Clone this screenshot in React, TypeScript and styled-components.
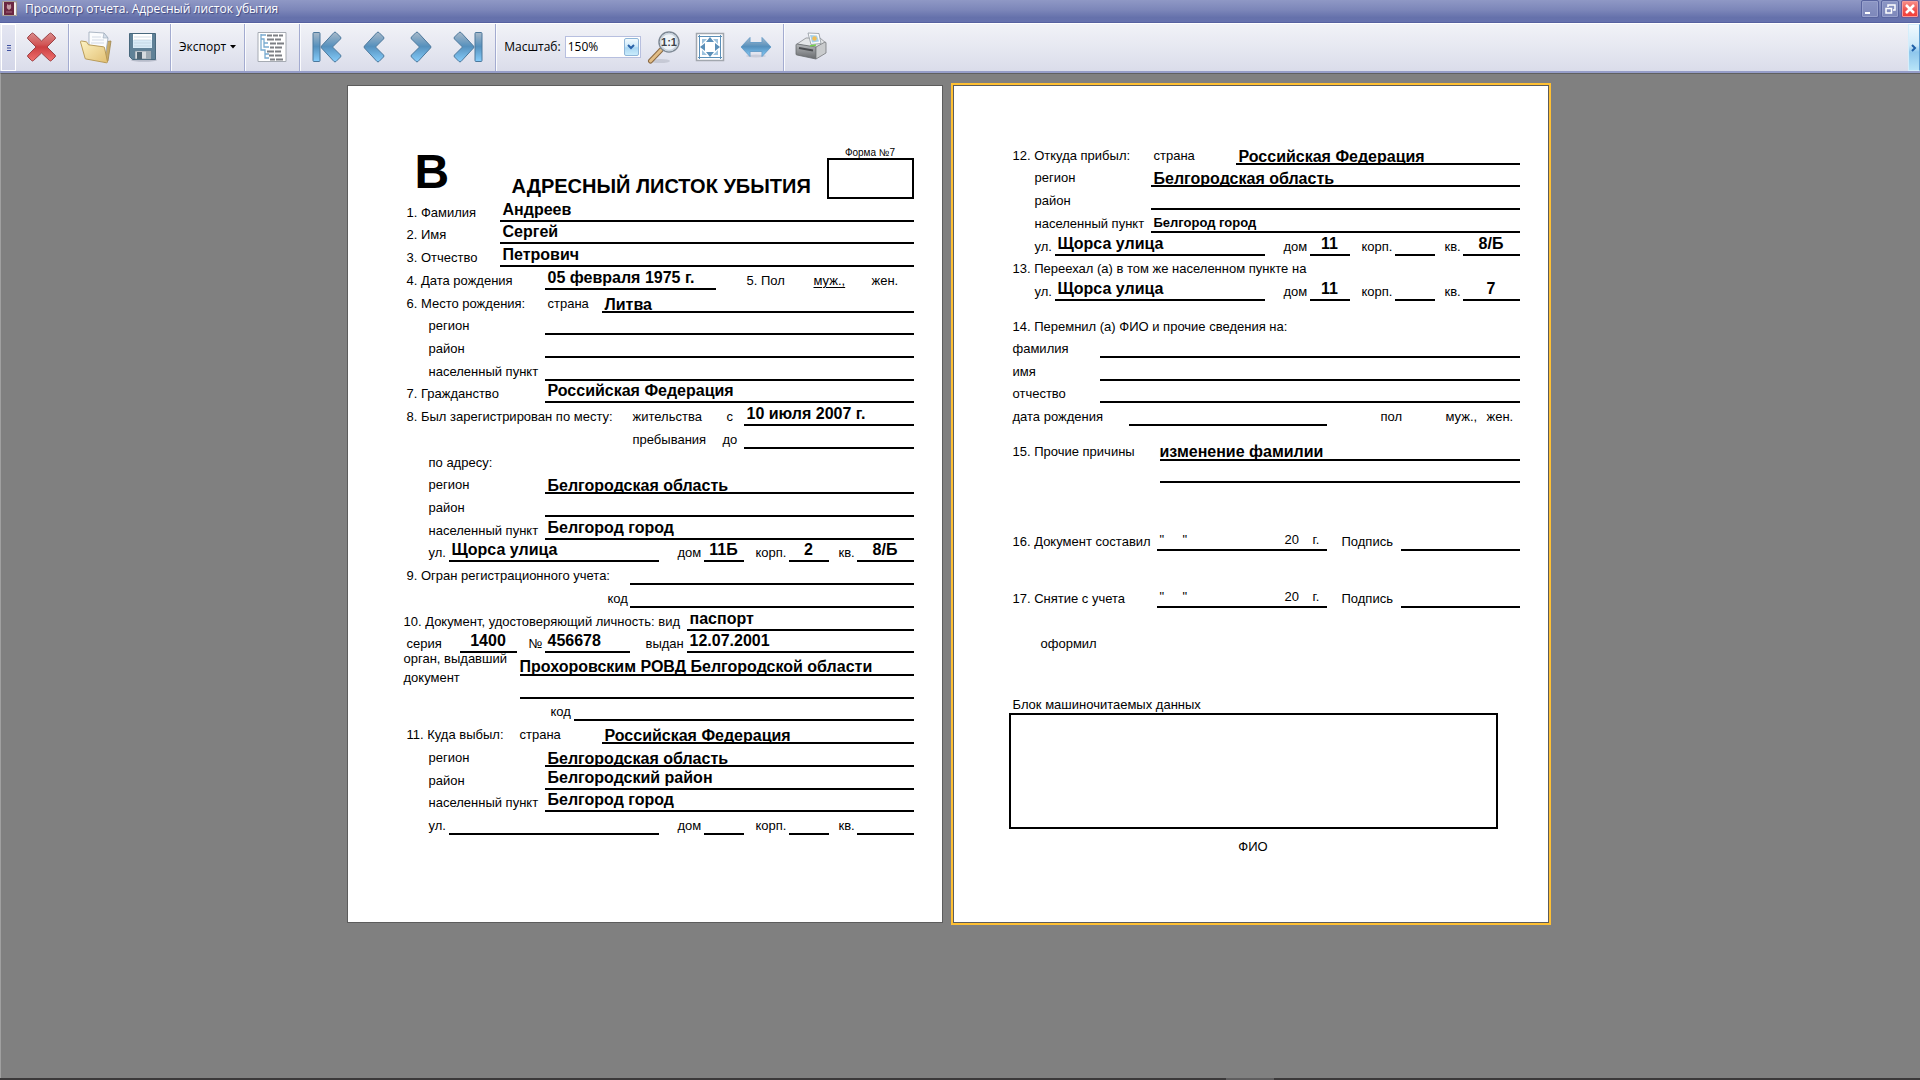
import React from "react";
import styled, { createGlobalStyle } from "styled-components";

const GlobalStyle = createGlobalStyle`
  *, *::before, *::after { box-sizing: border-box; }
  html, body, #root { height: 100%; }
  body { margin: 0; background: #808080; overflow: hidden; }
`;

const uiFont = `"Open Sans", "Noto Sans", sans-serif`;
const paperFont = `"Liberation Sans", Arial, sans-serif`;

/* ---------- window chrome ---------- */

const Window = styled.div`
  display: flex;
  flex-direction: column;
  min-height: 100vh;
  font-family: ${uiFont};
  font-size: 12px;
  color: #000;
`;

const TitleBar = styled.header`
  display: flex;
  align-items: center;
  height: 23px;
  padding: 0 1px 4px 2px;
  background: linear-gradient(#8f98c5, #7c86b9 45%, #6571ab 80%, #6672ae);
  border-bottom: 1px solid #5661a0;
`;

const Title = styled.h1`
  flex: 1;
  margin: 0 0 0 7px;
  font-size: 12px;
  line-height: 18px;
  font-weight: 400;
  color: #fff;
  text-shadow: 1px 1px 1px #3c467f;
`;

const WindowButtons = styled.div`
  display: flex;
  gap: 2px;
`;

const WindowButton = styled.button<{ $close?: boolean }>`
  display: grid;
  place-items: center;
  width: 18px;
  height: 18px;
  padding: 0;
  border: 1px solid ${(p) => (p.$close ? "#6b5a98" : "#59649f")};
  border-radius: 2px;
  background: ${(p) =>
    p.$close ? "linear-gradient(#f7908a, #ef5350 55%, #f23b34)" : "linear-gradient(#8c96c4, #7d87ba)"};
  box-shadow: inset 0 0 0 1px ${(p) => (p.$close ? "#f59a98" : "#98a1cc")};
`;

const ToolBar = styled.nav`
  display: flex;
  align-items: stretch;
  height: 50px;
  padding-left: 1px;
  background: linear-gradient(#f1f2f7, #e6e8f1 50%, #dadcea);
  border-top: 1px solid #fff;
  border-bottom: 2px solid #959dc8;
`;

const Grip = styled.div`
  display: grid;
  place-items: center;
  width: 15px;
  background: linear-gradient(#e4e6f2, #d3d6e8);
  border: 1px solid #fff;
`;

const Group = styled.div<{ $pad?: number; $gap?: number }>`
  display: flex;
  align-items: center;
  gap: ${(p) => p.$gap ?? 1}px;
  padding: 0 ${(p) => p.$pad ?? 4}px 1px;
  border-right: 1px solid #a3abd0;
  box-shadow: 1px 0 0 #fafbfd;
  &:last-of-type { border-right: 0; box-shadow: none; }
`;

const ToolButton = styled.button`
  display: grid;
  place-items: center;
  width: 46px;
  height: 42px;
  padding: 0;
  border: 0;
  background: none;
`;

const ExportButton = styled.button`
  display: flex;
  align-items: center;
  gap: 4px;
  padding: 0;
  border: 0;
  background: none;
  font: 12px/18px ${uiFont};
  color: #000;
`;

const ScaleLabel = styled.label`
  display: flex;
  align-items: center;
  gap: 4px;
  padding-left: 4px;
  line-height: 18px;
`;

const SelectBox = styled.span`
  position: relative;
  display: block;
  width: 76px;
`;

const Select = styled.select`
  appearance: none;
  display: block;
  width: 100%;
  height: 22px;
  padding: 0 0 0 2px;
  border: 1px solid #b7bfdf;
  border-radius: 0;
  background: #fff;
  font: 12px/18px ${uiFont};
  color: #000;
`;

const SelectArrow = styled.span`
  position: absolute;
  top: 2px;
  right: 2px;
  display: grid;
  place-items: center;
  width: 15px;
  height: 18px;
  border: 1px solid #8fb6d8;
  border-radius: 2px;
  background: linear-gradient(#f2fafe, #cfeafa 45%, #a9d6f3 55%, #c9ecfb);
  pointer-events: none;
`;

const Overflow = styled.button`
  display: grid;
  place-items: center;
  width: 12px;
  margin-left: auto;
  padding: 0;
  border: 1px solid #d5eefb;
  border-right-color: #5f9fd2;
  background: linear-gradient(#f0f9fe, #cde9fa 45%, #8ec6ec 60%, #b7e4f8);
`;

/* ---------- paper ---------- */

const Workspace = styled.main`
  flex: 1;
  display: flex;
  justify-content: center;
  align-items: flex-start;
  gap: 10px;
  padding: 11px 26px 0 0;
  background: #808080;
  border-top: 1px solid #606060;
  border-left: 1px solid #a0a0a0;
`;

const StatusStrip = styled.footer`
  display: flex;
  height: 2px;
  padding-left: 1226px;
  background: #3b393a;
  &::before { content: ""; width: 48px; background: #5f5e5f; }
`;

const Sheet = styled.section<{ $current?: boolean }>`
  width: 596px;
  min-height: 838px;
  padding: 56px 28px 0 59px;
  border: 1px solid #5c5c5c;
  outline: ${(p) => (p.$current ? "2px solid #ffc032" : "none")};
  background: #fff;
  font-family: ${paperFont};
  font-size: 13px;
  line-height: 15px;
`;

const SheetHeader = styled.header`
  display: grid;
  grid-template-columns: 105px 1fr 87px;
  align-items: end;
  height: 57px;
`;

const Letter = styled.strong`
  padding-left: 8px;
  font-size: 48px;
  line-height: 55px;
`;

const SheetTitle = styled.h2`
  margin: 0;
  font-size: 20px;
  line-height: 25px;
  font-weight: 700;
  white-space: nowrap;
`;

const FormNumber = styled.div`
  font-size: 10px;
  line-height: 11px;
  text-align: center;
`;

const Frame = styled.div<{ $h: number }>`
  height: ${(p) => p.$h}px;
  border: 2px solid #000;
`;

const Rows = styled.div<{ $h: number; $gap?: number }>`
  display: grid;
  grid-auto-rows: 1fr;
  height: ${(p) => p.$h}px;
  margin-top: ${(p) => p.$gap ?? 0}px;
  line-height: 19px;
`;

const Row = styled.div<{ $cols: string; $indent?: number; $span?: number }>`
  display: grid;
  grid-template-columns: ${(p) => p.$cols};
  align-items: end;
  padding-left: ${(p) => p.$indent ?? 0}px;
  grid-row: span ${(p) => p.$span ?? 1};
  white-space: nowrap;
`;

const OutRow = styled(Row)`
  margin-left: -3px;
`;

const Line = styled.span<{ $low?: boolean; $center?: boolean; $flush?: boolean; $small?: boolean }>`
  display: flex;
  align-items: flex-end;
  align-self: stretch;
  justify-content: ${(p) => (p.$center ? "center" : "flex-start")};
  padding: 0 0 ${(p) => (p.$low || p.$flush || p.$small ? 0 : 1)}px ${(p) => (p.$center || p.$flush ? 0 : 3)}px;
  overflow: ${(p) => (p.$low ? "hidden" : "visible")};
  border-bottom: 2px solid #000;
  font-size: ${(p) => (p.$small ? 13 : 16)}px;
  line-height: ${(p) => (p.$low ? 12 : p.$flush ? 14 : p.$small ? 17 : 19)}px;
  font-weight: 700;
`;

const Underlined = styled.u`
  text-underline-offset: 2px;
`;

const Issuer = styled.span`
  align-self: start;
  margin-top: -4px;
`;

const LinePair = styled.span`
  display: grid;
  grid-auto-rows: 1fr;
  align-self: stretch;
`;

const DateLine = styled(Line)`
  display: grid;
  grid-template-columns: 23px 102px 28px 1fr;
  align-items: end;
  font-size: 13px;
  font-weight: 400;
  line-height: 17px;
`;

const Caption = styled.p<{ $gap: number; $indent?: number; $center?: boolean }>`
  margin: ${(p) => p.$gap}px 0 0;
  padding-left: ${(p) => p.$indent ?? 0}px;
  text-align: ${(p) => (p.$center ? "center" : "left")};
`;

const MachineBlock = styled.div`
  width: 489px;
  margin-left: -4px;
  padding-top: 1px;
`;

/* ---------- icons ---------- */

const BlueGradient = ({ id }: { id: string }) => (
  <defs>
    <linearGradient id={id} x1="0" y1="0" x2="0" y2="1">
      <stop offset="0" stopColor="#a9b9c8" />
      <stop offset=".48" stopColor="#5590bd" />
      <stop offset="1" stopColor="#86cdfb" />
    </linearGradient>
  </defs>
);

const PassportIcon = () => (
  <svg width="16" height="16" viewBox="0 0 16 16">
    <path d="M1 1h12l2 1v13H2l-1-1z" fill="#d9d0cf" />
    <path d="M2 1h10v13H2z" fill="#6b2742" />
    <path d="M12 2h2v12l-2 1z" fill="#f4f0ea" />
    <circle cx="7" cy="6" r="2.4" fill="#a4697c" />
    <path d="M5 3l2 1.500 2-1.500v4L7 9 5 7z" fill="#c29aa2" />
    <path d="M4 11h6" stroke="#a4697c" />
    <path d="M.5.5h14v14H.5z" fill="none" stroke="#a59b91" />
  </svg>
);

const CloseIcon = () => (
  <svg width="32" height="32" viewBox="0 0 32 32">
    <defs>
      <linearGradient id="redFill" x1="0" y1="0" x2="0" y2="1">
        <stop offset="0" stopColor="#d98a8a" />
        <stop offset=".4" stopColor="#d25858" />
        <stop offset=".5" stopColor="#cb3f42" />
        <stop offset="1" stopColor="#f0706e" />
      </linearGradient>
    </defs>
    <path
      d="M7.500 2.500 15.500 10l8-7.500q1-1 2 0l3.500 3.500q1 1 0 2L21 16l8 8q1 1 0 2l-3.500 3.500q-1 1-2 0L15.500 22l-8 7.500q-1 1-2 0L2 26q-1-1 0-2l8-8-8-8q-1-1 0-2l3.500-3.500q1-1 2 0z"
      fill="url(#redFill)"
      stroke="#9a4246"
    />
  </svg>
);

const FolderIcon = () => (
  <svg width="34" height="34" viewBox="0 0 34 34">
    <defs>
      <linearGradient id="folderFill" x1="0" y1="0" x2="1" y2="1">
        <stop offset="0" stopColor="#fdf3c4" />
        <stop offset="1" stopColor="#e2bf72" />
      </linearGradient>
    </defs>
    <path d="M24 12l8-1-3 20-4 1z" fill="#c9ab68" stroke="#9f874f" strokeWidth=".8" />
    <path d="M10 2l15 1 4 5-3 20-16-2z" fill="#fbfcfe" stroke="#9aa7b8" strokeWidth=".8" />
    <path d="M25 3l-1 5h5z" fill="#d5dfea" stroke="#9aa7b8" strokeWidth=".6" />
    <path d="M13 7h9M13 10h12M12 13h13" stroke="#d3dae5" />
    <path d="M1.500 12q0-1 1-1l5 .8 2 3 15 2q1 0 1 1l3 14q0 1-1 1L7 29q-1 0-1-1z" fill="url(#folderFill)" stroke="#b3944f" strokeWidth=".9" />
  </svg>
);

const SaveIcon = () => (
  <svg width="30" height="32" viewBox="0 0 30 32">
    <ellipse cx="16" cy="29" rx="13" ry="1.800" fill="#9da3b3" opacity=".6" />
    <path d="M1.500 2.500h26v26h-23l-3-3z" fill="#5f8197" stroke="#48687d" />
    <path d="M5 3h19v14H5z" fill="#fff" />
    <path d="M5 9h19v8H5z" fill="#d8ebf7" />
    <path d="M6 6h17M6 9h17M6 12h17M6 15h17" stroke="#bfcfdb" strokeWidth=".7" />
    <path d="M7 20h16v8H7z" fill="#d6dbdf" stroke="#6d8291" strokeWidth=".6" />
    <path d="M9 21h5v7H9z" fill="#4e6473" />
    <path d="M18 20h5v8h-5z" fill="#9fabb4" />
  </svg>
);

const OutlineIcon = () => (
  <svg width="30" height="32" viewBox="0 0 30 32">
    <path d="M1 1.500h28v29H1z" fill="#fff" stroke="#a6abb3" />
    <path d="M4 3v16h3M4 4h5M4 8h3v4h4M7 12v4h5M4 19h4v8h4M8 23h4" fill="none" stroke="#79abd0" strokeWidth="1.300" />
    <path
      d="M10 4.500h5m1 0h5m1 0h4M10 8.500h7m1 0h6M13 12.500h6m1 0h7M13 16.500h4m1 0h7M10 20.500h7m1 0h6M12 24.500h5m1 0h7M13 28.500h5m1 0h7"
      stroke="#7c7f84"
      strokeWidth="1.800"
    />
  </svg>
);

const chevronLeft = "M21 1.500 25.500 6q1 1 0 2L17.500 16l8 8q1 1 0 2L21 30.500q-1 .8-2 0L6.500 17q-1-1 0-2L19 1.500q1-.8 2 0z";

const StepIcon = ({ id, flip, bar }: { id: string; flip?: boolean; bar?: boolean }) => (
  <svg width="32" height="32" viewBox="0 0 32 32">
    <BlueGradient id={id} />
    <g transform={flip ? "matrix(-1 0 0 1 32 0)" : undefined} fill={`url(#${id})`} stroke="#4c789c" strokeLinejoin="round">
      {bar ? (
        <>
          <rect x="2" y="1.500" width="7" height="29" rx="1" />
          <path d={chevronLeft} transform="translate(4 0)" />
        </>
      ) : (
        <path d={chevronLeft} />
      )}
    </g>
  </svg>
);

const ActualSizeIcon = () => (
  <svg width="34" height="34" viewBox="0 0 34 34">
    <ellipse cx="13" cy="31" rx="10" ry="2" fill="#aeb2be" opacity=".5" />
    <path d="M14 20 3.500 31" stroke="#8a6842" strokeWidth="5" strokeLinecap="round" />
    <path d="M14 20 3.500 31" stroke="#e2bd86" strokeWidth="3" strokeLinecap="round" />
    <circle cx="22" cy="12" r="10" fill="#eef3f8" stroke="#7d8894" strokeWidth="1.500" />
    <circle cx="22" cy="12" r="8.500" fill="none" stroke="#c8d2dc" strokeWidth="1.500" />
    <text x="22" y="16" textAnchor="middle" fontFamily="Liberation Sans, sans-serif" fontSize="11" fontWeight="700" fill="#3e4349">1:1</text>
  </svg>
);

const FitPageIcon = () => (
  <svg width="30" height="30" viewBox="0 0 30 30">
    <path d="M1.500 1.500h27v27h-27z" fill="#fff" stroke="#a2a7ae" strokeWidth="1.500" />
    <path d="M3 4.500h24M3 25.500h24M4.500 3v24M25.500 3v24" stroke="#5b8fb8" />
    <path d="M15 5l4 5h-8zM15 25l4-5h-8zM5 15l5-4v8zM25 15l-5-4v8z" fill="#5b8fb8" />
    <path d="M7 7h5l-5 5zM23 7h-5l5 5zM7 23h5l-5-5zM23 23h-5l5-5z" fill="#9cc2de" />
  </svg>
);

const FitWidthIcon = () => (
  <svg width="32" height="32" viewBox="0 0 32 32">
    <BlueGradient id="fitWidth" />
    <ellipse cx="16" cy="25" rx="10" ry="1.500" fill="#b9bdcc" opacity=".6" />
    <path d="M1 16 10 6.500v5h12v-5L31 16l-9 9.500v-5H10v5z" fill="url(#fitWidth)" stroke="#6a9fc9" strokeLinejoin="round" />
  </svg>
);

const PrinterIcon = () => (
  <svg width="34" height="32" viewBox="0 0 34 32">
    <defs>
      <linearGradient id="printerFill" x1="0" y1="0" x2="0" y2="1">
        <stop offset="0" stopColor="#b5b8bb" />
        <stop offset="1" stopColor="#67696c" />
      </linearGradient>
    </defs>
    <path d="M3 13l9-6h14l6 5-11 5z" fill="#e4e6e8" stroke="#8a8d90" strokeWidth=".8" />
    <path d="M14 2l11 .5 2 10-10 1z" fill="#fafbfc" stroke="#8f979e" strokeWidth=".8" />
    <path d="M16 4l7 .5 2 6-7 1z" fill="#a6d0e8" />
    <circle cx="20.500" cy="7.500" r="2.200" fill="#f1bd55" />
    <path d="M2 14q0-1 1-1l19 3v12L3 24q-1 0-1-1z" fill="url(#printerFill)" stroke="#66696c" strokeWidth=".8" />
    <path d="M22 16l9-5q1 0 1 1v10l-10 6z" fill="#c9cbcd" stroke="#77797c" strokeWidth=".8" />
    <path d="M5 17l14 2.500" stroke="#4b4d50" strokeWidth="2" />
    <path d="M16 15l6-1" stroke="#74d24e" strokeWidth="1.500" />
  </svg>
);

/* ---------- repeated form parts ---------- */

type AddressProps = { street?: string; house?: string; block?: string; flat?: string };

const AddressRow = ({ street, house, block, flat }: AddressProps) => (
  <Row $indent={22} $cols="20px 210px 19px 26px 40px 12px 33px 40px 10px 18px 1fr">
    <span>ул.</span>
    <Line>{street}</Line>
    <i />
    <span>дом</span>
    <Line $center>{house}</Line>
    <i />
    <span>корп.</span>
    <Line $center>{block}</Line>
    <i />
    <span>кв.</span>
    <Line $center>{flat}</Line>
  </Row>
);

type PlaceProps = { label: string; value?: string; low?: boolean; small?: boolean };

const PlaceRow = ({ label, value, low, small }: PlaceProps) => (
  <Row $indent={22} $cols="116px 1fr">
    <span>{label}</span>
    <Line $low={low} $small={small}>{value}</Line>
  </Row>
);

const NameRow = ({ label, value }: { label: string; value: string }) => (
  <Row $cols="93px 1fr">
    <span>{label}</span>
    <Line>{value}</Line>
  </Row>
);

const BlankRow = ({ label }: { label: string }) => (
  <Row $cols="87px 1fr">
    <span>{label}</span>
    <Line />
  </Row>
);

const SignRow = ({ label }: { label: string }) => (
  <Row $cols="144px 170px 15px 59px 1fr">
    <span>{label}</span>
    <DateLine>
      <span>"</span>
      <span>"</span>
      <span>20</span>
      <span>г.</span>
    </DateLine>
    <i />
    <span>Подпись</span>
    <Line />
  </Row>
);

const DepartureSheet = () => (
  <Sheet>
    <SheetHeader>
      <Letter>В</Letter>
      <SheetTitle>АДРЕСНЫЙ ЛИСТОК УБЫТИЯ</SheetTitle>
      <div>
        <FormNumber>Форма №7</FormNumber>
        <Frame $h={41} />
      </div>
    </SheetHeader>
    <Rows $h={636}>
      <NameRow label="1. Фамилия" value="Андреев" />
      <NameRow label="2. Имя" value="Сергей" />
      <NameRow label="3. Отчество" value="Петрович" />
      <Row $cols="138px 171px 31px 67px 58px 1fr">
        <span>4. Дата рождения</span>
        <Line>05 февраля 1975 г.</Line>
        <i />
        <span>5. Пол</span>
        <Underlined>муж.,</Underlined>
        <span>жен.</span>
      </Row>
      <Row $cols="141px 54px 1fr">
        <span>6. Место рождения:</span>
        <span>страна</span>
        <Line $low>Литва</Line>
      </Row>
      <PlaceRow label="регион" />
      <PlaceRow label="район" />
      <PlaceRow label="населенный пункт" />
      <Row $cols="138px 1fr">
        <span>7. Гражданство</span>
        <Line>Российская Федерация</Line>
      </Row>
      <Row $cols="226px 94px 17px 1fr">
        <span>8. Был зарегистрирован по месту:</span>
        <span>жительства</span>
        <span>с</span>
        <Line>10 июля 2007 г.</Line>
      </Row>
      <Row $indent={226} $cols="90px 21px 1fr">
        <span>пребывания</span>
        <span>до</span>
        <Line />
      </Row>
      <Row $indent={22} $cols="1fr">
        <span>по адресу:</span>
      </Row>
      <PlaceRow label="регион" value="Белгородская область" low />
      <PlaceRow label="район" />
      <PlaceRow label="населенный пункт" value="Белгород город" />
      <AddressRow street="Щорса улица" house="11Б" block="2" flat="8/Б" />
      <Row $cols="223px 1fr">
        <span>9. Огран регистрационного учета:</span>
        <Line />
      </Row>
      <Row $indent={201} $cols="22px 1fr">
        <span>код</span>
        <Line />
      </Row>
      <OutRow $cols="283px 1fr">
        <span>10. Документ, удостоверяющий личность: вид</span>
        <Line>паспорт</Line>
      </OutRow>
      <Row $cols="53px 57px 12px 16px 85px 16px 41px 1fr">
        <span>серия</span>
        <Line $center>1400</Line>
        <i />
        <span>№</span>
        <Line>456678</Line>
        <i />
        <span>выдан</span>
        <Line>12.07.2001</Line>
      </Row>
      <OutRow $span={2} $cols="116px 1fr">
        <Issuer>
          орган, выдавший
          <br />
          документ
        </Issuer>
        <LinePair>
          <Line $flush>Прохоровским РОВД Белгородской области</Line>
          <Line />
        </LinePair>
      </OutRow>
      <Row $indent={144} $cols="23px 1fr">
        <span>код</span>
        <Line />
      </Row>
      <Row $cols="113px 82px 1fr">
        <span>11. Куда выбыл:</span>
        <span>страна</span>
        <Line $low>Российская Федерация</Line>
      </Row>
      <PlaceRow label="регион" value="Белгородская область" low />
      <PlaceRow label="район" value="Белгородский район" />
      <PlaceRow label="населенный пункт" value="Белгород город" />
      <AddressRow />
    </Rows>
  </Sheet>
);

const ArrivalSheet = () => (
  <Sheet $current>
    <Rows $h={159}>
      <Row $cols="141px 82px 1fr">
        <span>12. Откуда прибыл:</span>
        <span>страна</span>
        <Line $low>Российская Федерация</Line>
      </Row>
      <PlaceRow label="регион" value="Белгородская область" low />
      <PlaceRow label="район" />
      <PlaceRow label="населенный пункт" value="Белгород город" small />
      <AddressRow street="Щорса улица" house="11" flat="8/Б" />
      <Row $cols="1fr">
        <span>13. Переехал (а) в том же населенном пункте на</span>
      </Row>
      <AddressRow street="Щорса улица" house="11" flat="7" />
    </Rows>
    <Rows $h={113} $gap={12}>
      <Row $cols="1fr">
        <span>14. Перемнил (а) ФИО и прочие сведения на:</span>
      </Row>
      <BlankRow label="фамилия" />
      <BlankRow label="имя" />
      <BlankRow label="отчество" />
      <Row $cols="116px 198px 54px 65px 41px 1fr">
        <span>дата рождения</span>
        <Line />
        <i />
        <span>пол</span>
        <span>муж.,</span>
        <span>жен.</span>
      </Row>
    </Rows>
    <Rows $h={45} $gap={12}>
      <Row $cols="147px 1fr">
        <span>15. Прочие причины</span>
        <Line $flush>изменение фамилии</Line>
      </Row>
      <Row $indent={147} $cols="1fr">
        <Line />
      </Row>
    </Rows>
    <Rows $h={23} $gap={45}>
      <SignRow label="16. Документ составил" />
    </Rows>
    <Rows $h={23} $gap={34}>
      <SignRow label="17. Снятие с учета" />
    </Rows>
    <Caption $gap={28} $indent={28}>оформил</Caption>
    <Caption $gap={46}>Блок машиночитаемых данных</Caption>
    <MachineBlock>
      <Frame $h={116} />
      <Caption $gap={10} $center>ФИО</Caption>
    </MachineBlock>
  </Sheet>
);

export default function App() {
  return (
    <Window>
      <GlobalStyle />
      <TitleBar>
        <PassportIcon />
        <Title>Просмотр отчета. Адресный листок убытия</Title>
        <WindowButtons>
          <WindowButton aria-label="Свернуть">
            <svg width="12" height="12" viewBox="0 0 12 12"><path d="M1 9h5v2H1z" fill="#fff" /></svg>
          </WindowButton>
          <WindowButton aria-label="Восстановить">
            <svg width="12" height="12" viewBox="0 0 12 12">
              <path d="M4 4V2h7v5H9" fill="none" stroke="#fff" strokeWidth="1.500" />
              <path d="M2 5.500h5.500V10H2z" fill="none" stroke="#fff" strokeWidth="1.500" />
            </svg>
          </WindowButton>
          <WindowButton $close aria-label="Закрыть">
            <svg width="12" height="12" viewBox="0 0 12 12"><path d="M2 2l8 8M10 2l-8 8" stroke="#fff" strokeWidth="2.500" /></svg>
          </WindowButton>
        </WindowButtons>
      </TitleBar>
      <ToolBar>
        <Grip>
          <svg width="6" height="8" viewBox="0 0 6 8"><path d="M1 1.500h4M1 4h4M1 6.500h4" stroke="#3f51a0" /></svg>
        </Grip>
        <Group $pad={3}>
          <ToolButton aria-label="Закрыть отчет"><CloseIcon /></ToolButton>
        </Group>
        <Group>
          <ToolButton aria-label="Открыть"><FolderIcon /></ToolButton>
          <ToolButton aria-label="Сохранить"><SaveIcon /></ToolButton>
        </Group>
        <Group $pad={8}>
          <ExportButton>
            Экспорт
            <svg width="6" height="4" viewBox="0 0 6 4"><path d="M0 0h6L3 3.500z" /></svg>
          </ExportButton>
        </Group>
        <Group>
          <ToolButton aria-label="Структура"><OutlineIcon /></ToolButton>
        </Group>
        <Group>
          <ToolButton aria-label="Первая страница"><StepIcon id="stepFirst" bar /></ToolButton>
          <ToolButton aria-label="Предыдущая страница"><StepIcon id="stepPrev" /></ToolButton>
          <ToolButton aria-label="Следующая страница"><StepIcon id="stepNext" flip /></ToolButton>
          <ToolButton aria-label="Последняя страница"><StepIcon id="stepLast" flip bar /></ToolButton>
        </Group>
        <Group $gap={0}>
          <ScaleLabel>
            Масштаб:
            <SelectBox>
              <Select defaultValue="150%">
                <option>100%</option>
                <option>150%</option>
                <option>200%</option>
              </Select>
              <SelectArrow>
                <svg width="8" height="6" viewBox="0 0 8 6"><path d="M1 1l3 3 3-3" fill="none" stroke="#2a62a8" strokeWidth="2" /></svg>
              </SelectArrow>
            </SelectBox>
          </ScaleLabel>
          <ToolButton aria-label="Реальный размер"><ActualSizeIcon /></ToolButton>
          <ToolButton aria-label="Страница целиком"><FitPageIcon /></ToolButton>
          <ToolButton aria-label="По ширине"><FitWidthIcon /></ToolButton>
        </Group>
        <Group>
          <ToolButton aria-label="Печать"><PrinterIcon /></ToolButton>
        </Group>
        <Overflow aria-label="Еще">
          <svg width="6" height="8" viewBox="0 0 6 8"><path d="M1 1l3 3-3 3" fill="none" stroke="#1f5fa8" strokeWidth="2" /></svg>
        </Overflow>
      </ToolBar>
      <Workspace>
        <DepartureSheet />
        <ArrivalSheet />
      </Workspace>
      <StatusStrip />
    </Window>
  );
}
